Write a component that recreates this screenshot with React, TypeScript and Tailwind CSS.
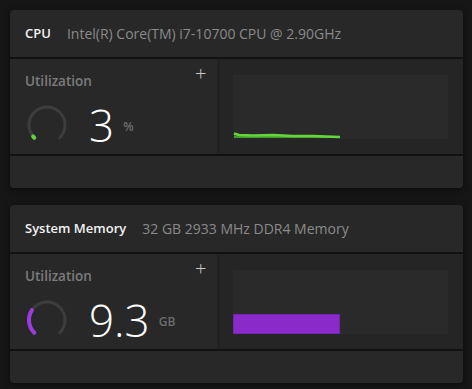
import React from "react";

const font = { fontFamily: '"Open Sans", "Noto Sans", sans-serif' };

function arcPoint(cx: number, cy: number, r: number, deg: number) {
  const rad = (deg * Math.PI) / 180;
  return [cx + r * Math.sin(rad), cy - r * Math.cos(rad)];
}

function Gauge({ fraction, color }: { fraction: number; color: string }) {
  const [sx, sy] = arcPoint(22, 22, 18, -135);
  const [ex, ey] = arcPoint(22, 22, 18, 135);
  const endDeg = -135 + 270 * fraction;
  const [vx, vy] = arcPoint(22, 22, 18, endDeg);
  const large = 270 * fraction > 180 ? 1 : 0;
  return (
    <svg width="44" height="44" viewBox="0 0 44 44">
      <path
        d={`M ${sx} ${sy} A 18 18 0 1 1 ${ex} ${ey}`}
        fill="none"
        stroke="#3d3d3d"
        strokeWidth="3"
        strokeLinecap="round"
      />
      <path
        d={`M ${sx} ${sy} A 18 18 0 ${large} 1 ${vx} ${vy}`}
        fill="none"
        stroke={color}
        strokeWidth="4"
        strokeLinecap="round"
      />
    </svg>
  );
}

function Card({
  title,
  detail,
  value,
  unit,
  fraction,
  color,
  chart,
}: {
  title: string;
  detail: string;
  value: string;
  unit: string;
  fraction: number;
  color: string;
  chart: React.ReactNode;
}) {
  return (
    <div className="w-[453px] rounded-[4px] bg-[#111111] overflow-hidden flex flex-col gap-[2px] shadow-[0_2px_6px_rgba(0,0,0,0.5)]">
      {/* header */}
      <div className="h-[47px] bg-[#282828] flex items-center gap-[16px] px-[15px]">
        <span className="text-[13px] text-[#f2f2f2] font-semibold">{title}</span>
        <span className="text-[14px] text-[#8a8a8a]">{detail}</span>
      </div>

      {/* body */}
      <div className="h-[95px] flex">
        <div className="w-[207px] bg-[#282828] relative pl-[15px] pt-[12px]">
          <div className="text-[13.5px] text-[#7c7c7c] font-semibold">Utilization</div>
          <span className="absolute left-[185px] top-[5px] text-[20px] leading-none text-[#c8c8c8] font-light">+</span>
          <div className="flex items-center mt-[12px]">
            <Gauge fraction={fraction} color={color} />
            <span className="ml-[20px] text-[44px] leading-none font-light text-white">{value}</span>
            <span className="ml-[9px] mt-[4px] text-[12px] text-[#6c6c6c] font-semibold">{unit}</span>
          </div>
        </div>
        <div className="flex-1 bg-[#252525] border-l-[3px] border-[#222222] pl-[13px] pr-[15px] pt-[16px]">
          <div className="h-[64px] bg-[#2a2a2a] flex items-end">{chart}</div>
        </div>
      </div>

      {/* footer */}
      <div className="h-[32px] bg-[#282828]" />
    </div>
  );
}

export default function App() {
  return (
    <div
      className="w-[472px] h-[389px] bg-[#161616] pl-[10px] pt-[10px] flex flex-col gap-[17px]"
      style={font}
    >
      <Card
        title="CPU"
        detail="Intel(R) Core(TM) i7-10700 CPU @ 2.90GHz"
        value="3"
        unit="%"
        fraction={0.02}
        color="#5fd33a"
        chart={
          <svg width="215" height="64" viewBox="0 0 215 64" className="block">
            <path
              d="M1 57 L1 60.5 L107 61.5 L107 63 L1 63 Z"
              fill="#3f9a2a"
            />
            <polyline
              points="1,58.5 6,60 20,60.5 40,60 60,61 80,61 107,62"
              fill="none"
              stroke="#66d43d"
              strokeWidth="2.5"
            />
          </svg>
        }
      />
      <Card
        title="System Memory"
        detail="32 GB 2933 MHz DDR4 Memory"
        value="9.3"
        unit="GB"
        fraction={0.29}
        color="#9b3be0"
        chart={<div className="w-[107px] h-[20px] bg-[#8a2bc9] border border-[#7a22b5]" />}
      />
    </div>
  );
}
